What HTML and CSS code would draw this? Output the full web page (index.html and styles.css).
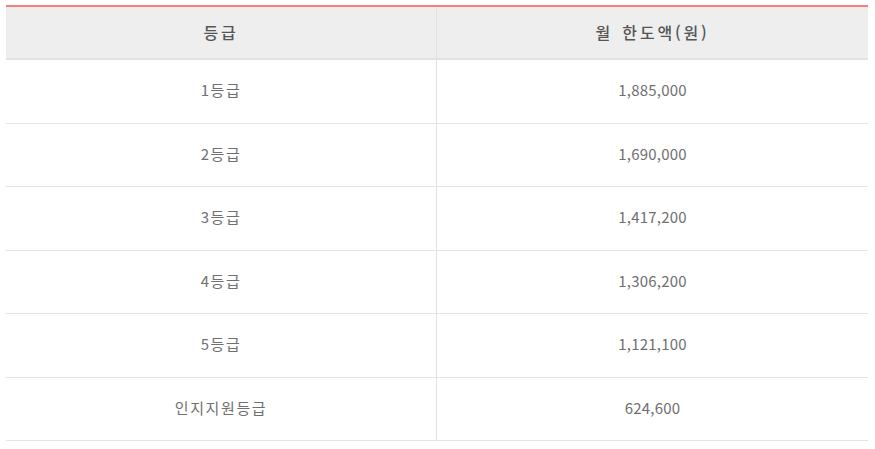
FILE: index.html
```html
<!DOCTYPE html>
<html lang="ko">
<head>
<meta charset="utf-8">
<link rel="stylesheet" href="styles.css">
</head>
<body>
<table class="grade-table">
  <thead>
    <tr>
      <th class="col-grade">등급</th>
      <th class="col-amount">월 한도액(원)</th>
    </tr>
  </thead>
  <tbody>
    <tr><td class="grade">1등급</td><td class="amount">1,885,000</td></tr>
    <tr><td class="grade">2등급</td><td class="amount">1,690,000</td></tr>
    <tr><td class="grade">3등급</td><td class="amount">1,417,200</td></tr>
    <tr><td class="grade">4등급</td><td class="amount">1,306,200</td></tr>
    <tr><td class="grade">5등급</td><td class="amount">1,121,100</td></tr>
    <tr><td class="grade">인지지원등급</td><td class="amount">624,600</td></tr>
  </tbody>
</table>
</body>
</html>
```

FILE: styles.css
```css
html, body {
  margin: 0;
  padding: 0;
  background: #ffffff;
}

body {
  padding: 5px 0 0 6px;
  font-family: "Noto Sans CJK KR", "Noto Sans", sans-serif;
}

.grade-table {
  width: 862px;
  border-collapse: collapse;
  border-top: 2px solid #ff7a7a;
  table-layout: fixed;
}

.grade-table th {
  height: 49px;
  padding: 0 0 2px;
  background: #eeeeee;
  color: #555555;
  font-size: 16px;
  font-weight: 500;
  letter-spacing: 2.8px;
  word-spacing: 2px;
  text-align: center;
  vertical-align: middle;
  border-bottom: 2px solid #e2e2e2;
}

.grade-table .col-grade {
  width: 430px;
}

.grade-table td {
  height: 59.5px;
  padding: 0 0 3px;
  color: #707070;
  font-size: 15px;
  font-weight: 400;
  text-align: center;
  vertical-align: middle;
  border-bottom: 1px solid #e4e4e4;
}

.grade-table td.grade {
  letter-spacing: 1.6px;
}

.grade-table td.amount {
  letter-spacing: 0.2px;
}

.grade-table th + th,
.grade-table td + td {
  border-left: 1px solid #e2e2e2;
}
```
